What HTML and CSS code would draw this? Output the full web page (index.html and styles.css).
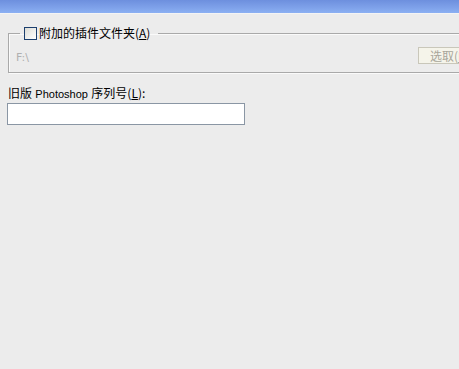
FILE: index.html
```html
<!DOCTYPE html>
<html>
<head>
<meta charset="utf-8">
<link rel="stylesheet" href="styles.css">
</head>
<body>
<div class="titlebar"></div>
<div class="content">
  <fieldset class="group">
    <legend class="legend"><span class="check"></span><span class="cjk">附加的插件文件夹(<u>A</u>)</span></legend>
    <div class="row">
      <span class="path">F:\</span>
      <button class="btn" disabled>选取(<u>H</u>)</button>
    </div>
  </fieldset>
  <div class="serial">
    <label class="label"><span class="cjk">旧版</span> <span class="lat">Photoshop</span> <span class="cjk">序列号(<u>L</u>):</span></label>
    <div class="input"></div>
  </div>
</div>
</body>
</html>
```
FILE: styles.css
```css
html, body {
  margin: 0;
  padding: 0;
  width: 459px;
  height: 369px;
  overflow: hidden;
  background: #ececec;
  font-family: "Liberation Sans", "Noto Sans CJK SC", sans-serif;
  font-size: 12px;
  color: #000;
}
.titlebar {
  height: 13px;
  background: linear-gradient(to bottom, #6d8fde 0%, #7fa2ea 60%, #8cb0f2 100%);
  border-bottom: 1px solid #f4f4f4;
}
.content {
  padding: 0 0 0 8px;
}
.group {
  margin: 11px 0 0 0;
  width: 520px;
  box-sizing: border-box;
  border: 1px solid #a9a9a9;
  padding: 0;
  height: 48px;
  box-shadow: inset 1px 1px 0 #fafafa, 1px 1px 0 #fafafa;
}
.legend {
  margin-left: 11px;
  padding: 0 8px 0 4px;
  display: flex;
  align-items: center;
  height: 16px;
  line-height: 16px;
}
.cjk { font-family: "Noto Sans CJK SC", sans-serif; font-size: 12px; }
.lat { font-family: "Liberation Sans", sans-serif; font-size: 11px; }
.check {
  width: 11px;
  height: 11px;
  border: 1px solid #1c3f6e;
  background: linear-gradient(135deg, #dcdcd6, #ffffff);
  margin-right: 2px;
  flex: none;
}
.row {
  display: flex;
  align-items: center;
  justify-content: space-between;
  padding: 6px 0 0 7px;
  width: 477px;
}
.path {
  color: #b0b0b0;
  font-family: "DejaVu Sans", sans-serif;
  font-size: 11px;
  padding-top: 3px;
}
.btn {
  width: 75px;
  height: 17px;
  padding: 0 0 0 11px;
  text-align: left;
  border: 1px solid #c9c7ba;
  background: #f5f4ea;
  color: #a8a69a;
  font-family: "Noto Sans CJK SC", sans-serif;
  font-size: 12px;
  line-height: 15px;
}
.serial {
  margin-top: 12px;
}
.label {
  display: block;
  line-height: 15px;
  height: 15px;
}
.input {
  margin: 3px 0 0 -1px;
  width: 236px;
  height: 20px;
  background: #fff;
  border: 1px solid #8a96a4;
}
```
